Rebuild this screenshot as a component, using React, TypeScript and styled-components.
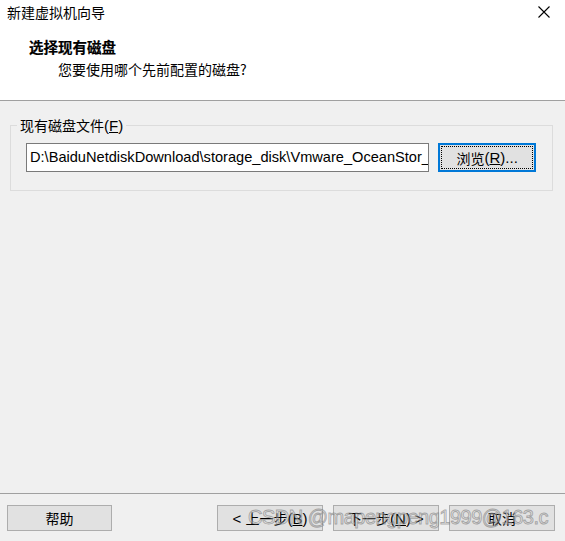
import React from "react";
import styled, { createGlobalStyle } from "styled-components";

const Global = createGlobalStyle`
  html, body { margin: 0; padding: 0; background: #ffffff; overflow: hidden; }
  * { box-sizing: border-box; }
`;

const cjk = `"Microsoft YaHei", "Noto Sans CJK SC", sans-serif`;
const latin = `"Segoe UI", "Liberation Sans", "Noto Sans CJK SC", sans-serif`;

const Window = styled.div`
  position: relative;
  width: 565px;
  height: 541px;
  display: flex;
  flex-direction: column;
  font-family: ${cjk};
  color: #000;
  overflow: hidden;
`;

const TitleBar = styled.div`
  height: 25px;
  display: flex;
  align-items: center;
  justify-content: space-between;
  padding: 0 15px 1px 7px;
  font-size: 14px;
  background: #fff;
`;

const Header = styled.div`
  background: #fff;
  height: 76px;
  padding: 12px 0 0 29px;
  border-bottom: 1px solid #a0a0a0;
  display: flex;
  flex-direction: column;
`;

const Heading = styled.div`
  font-size: 14.5px;
  font-weight: 700;
  line-height: 20px;
  -webkit-text-stroke: 0.2px #000;
`;

const SubHeading = styled.div`
  font-size: 14px;
  line-height: 20px;
  margin-top: 2px;
  padding-left: 29px;
`;

const Body = styled.div`
  flex: 1;
  background: #f0f0f0;
  padding: 14px 12px 0 10px;
`;

const Group = styled.fieldset`
  margin: 0;
  padding: 7px 16px 18px 15px;
  border: 1px solid #dcdcdc;
  display: flex;
  align-items: center;
  gap: 9px;
  min-width: 0;
`;

const Legend = styled.legend`
  font-size: 14px;
  line-height: 20px;
  padding: 0 3px;
  margin-left: -9px;
`;

const PathInput = styled.div`
  width: 405px;
  height: 29px;
  background: #fff;
  border: 1px solid #7a7a7a;
  padding: 0 0 0 3px;
  font-family: ${latin};
  font-size: 14.6px;
  line-height: 27px;
  white-space: nowrap;
  overflow: hidden;
`;

const Button = styled.div<{ $focused?: boolean; $w?: number }>`
  position: relative;
  width: ${(p) => p.$w ?? 106}px;
  height: ${(p) => (p.$focused ? 29 : 26)}px;
  background: #e1e1e1;
  border: ${(p) => (p.$focused ? "2px solid #0078d7" : "1px solid #adadad")};
  display: flex;
  align-items: center;
  justify-content: center;
  font-size: 14px;
  font-family: ${cjk};
  white-space: nowrap;
  ${(p) =>
    p.$focused
      ? `&::after { content: ""; position: absolute; inset: 1px; border: 1px dotted #000; }`
      : ""}
`;

const Latin = styled.span`
  font-family: ${latin};
  font-size: 15px;
`;

const Footer = styled.div`
  background: #f0f0f0;
  border-top: 1px solid #a0a0a0;
  height: 48px;
  padding: 11px 10px 0 7px;
  display: flex;
  align-items: flex-start;
  gap: 10px;
`;

const Spacer = styled.div`
  flex: 1;
`;

const Watermark = styled.div`
  position: absolute;
  left: 248px;
  top: 506px;
  font-family: "Liberation Sans", Arial, sans-serif;
  font-size: 20px;
  letter-spacing: -0.5px;
  color: rgba(235, 235, 235, 0.35);
  -webkit-text-stroke: 0.9px rgba(110, 110, 110, 0.55);
  white-space: nowrap;
  pointer-events: none;
`;

export default function App() {
  return (
    <Window>
      <Global />
      <TitleBar>
        <span>新建虚拟机向导</span>
        <svg width="12" height="12" viewBox="0 0 12 12">
          <path d="M0.5 0.5 L11.5 11.5 M11.5 0.5 L0.5 11.5" stroke="#000" strokeWidth="1.1" />
        </svg>
      </TitleBar>
      <Header>
        <Heading>选择现有磁盘</Heading>
        <SubHeading>您要使用哪个先前配置的磁盘?</SubHeading>
      </Header>
      <Body>
        <Group>
          <Legend>
            现有磁盘文件<Latin>(<u>F</u>)</Latin>
          </Legend>
          <PathInput>D:\BaiduNetdiskDownload\storage_disk\Vmware_OceanStor_dorado.vmdk</PathInput>
          <Button $focused $w={98}>
            浏览<Latin>(<u>R</u>)...</Latin>
          </Button>
        </Group>
      </Body>
      <Footer>
        <Button $w={105}>帮助</Button>
        <Spacer />
        <Button>
          <Latin>&lt;&nbsp;</Latin>上一步<Latin>(<u>B</u>)</Latin>
        </Button>
        <Button>
          下一步<Latin>(<u>N</u>)&nbsp;&gt;</Latin>
        </Button>
        <Button>取消</Button>
      </Footer>
      <Watermark>CSDN @mapengpeng1999@163.c</Watermark>
    </Window>
  );
}
